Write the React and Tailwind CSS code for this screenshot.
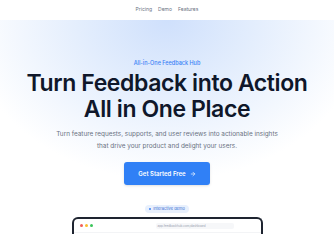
import React from "react";

const App = () => {
  return (
    <div className="w-[334px] h-[234px] overflow-hidden bg-white font-['Inter',sans-serif]">
      <header className="h-[20px] bg-white flex items-center justify-center gap-[6px] text-[5px] text-gray-500">
        <a>Pricing</a>
        <a>Demo</a>
        <a>Features</a>
      </header>

      <section className="h-[214px] flex flex-col items-center bg-[radial-gradient(ellipse_60%_75%_at_50%_0%,#cfe0fc_0%,#e4eefd_45%,#ffffff_100%)]">
        <div className="shrink-0 mt-[38px] px-[5px] py-[1px] rounded-full text-[5.5px] font-medium text-[#3b82f6]">
          All-in-One Feedback Hub
        </div>

        <h1 className="shrink-0 mt-[2px] text-center text-[23px] leading-[26px] font-semibold tracking-[-0.4px] text-[#0f172a]">
          Turn Feedback into Action
          <br />
          All in One Place
        </h1>

        <p className="shrink-0 mt-[6px] text-center text-[6.4px] leading-[12px] text-gray-500">
          Turn feature requests, supports, and user reviews into actionable insights
          <br />
          that drive your product and delight your users.
        </p>

        <button className="shrink-0 mt-[10px] w-[86px] h-[23px] rounded-[3px] bg-[#3080f6] text-white text-[6px] font-semibold flex items-center justify-center gap-[4px] shadow-sm">
          Get Started Free
          <svg width="6" height="6" viewBox="0 0 24 24" fill="none" stroke="currentColor" strokeWidth="2.6" strokeLinecap="round" strokeLinejoin="round">
            <path d="M5 12h14" />
            <path d="m12 5 7 7-7 7" />
          </svg>
        </button>

        <div className="shrink-0 mt-[20px] h-[8px] px-[4px] rounded-full bg-[#e8f0fd] flex items-center gap-[2px] text-[4px] text-[#3b6fd4]">
          <span className="w-[2px] h-[2px] rounded-full bg-[#3b82f6]" />
          Interactive demo
        </div>

        <div className="shrink-0 mt-[4px] w-[191px] h-[40px] rounded-t-[6px] border-[2px] border-b-0 border-[#1e2430] bg-white">
          <div className="h-[14px] flex items-center px-[6px] gap-[2px] border-b border-gray-100">
            <span className="w-[3px] h-[3px] rounded-full bg-[#f25f58]" />
            <span className="w-[3px] h-[3px] rounded-full bg-[#fbbe2e]" />
            <span className="w-[3px] h-[3px] rounded-full bg-[#3bc55a]" />
            <div className="flex-1 flex justify-center">
              <div className="w-[78px] h-[6px] ml-[40px] rounded-[2px] bg-[#f6f7f9] flex items-center pl-[2px] text-[3px] text-gray-400">
                app.feedbackhub.com/dashboard
              </div>
            </div>
          </div>
        </div>
      </section>
    </div>
  );
};

export default App;
